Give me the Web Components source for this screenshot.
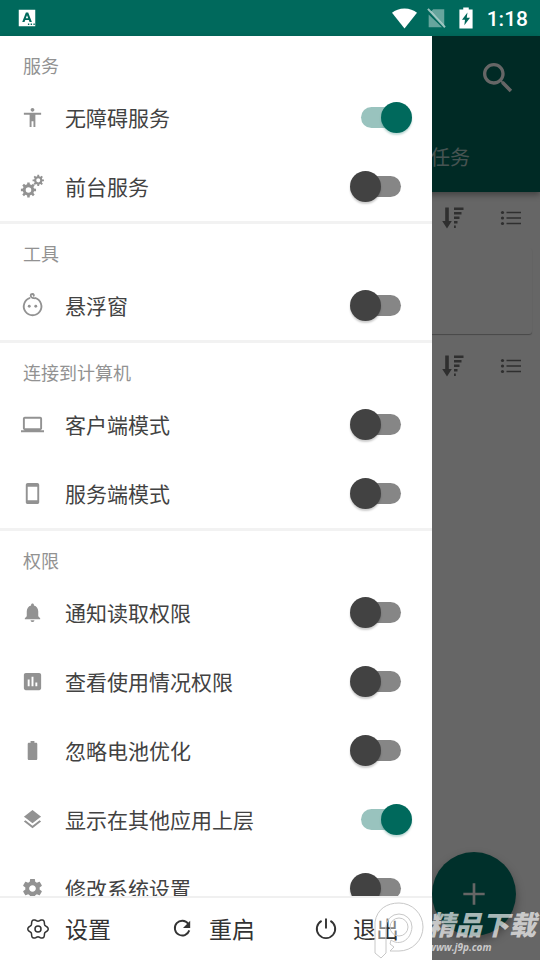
<!DOCTYPE html>
<html lang="zh-CN">
<head>
<meta charset="utf-8">
<meta name="viewport" content="width=device-width, initial-scale=1">
<title>服务</title>
<style>
html, body { margin: 0; height: 100%; }
body { font-family: Roboto, "Noto Sans CJK SC", sans-serif; overflow: hidden; }
</style>
</head>
<body>
<app-shell></app-shell>
<script>
const polar = (cx, cy, r, a) => `${(cx + r * Math.cos(a)).toFixed(2)} ${(cy + r * Math.sin(a)).toFixed(2)}`;
function cog(cx, cy, outer, inner, hole, teeth) {
  const pts = [], step = Math.PI * 2 / teeth;
  for (let i = 0; i < teeth; i++) {
    const a = i * step;
    pts.push(polar(cx, cy, inner, a - step * .3), polar(cx, cy, outer, a - step * .2),
             polar(cx, cy, outer, a + step * .2), polar(cx, cy, inner, a + step * .3));
  }
  return `M${pts.join('L')}ZM${cx - hole} ${cy}a${hole} ${hole} 0 1 0 ${hole * 2} 0a${hole} ${hole} 0 1 0 ${-hole * 2} 0Z`;
}
function wave(cx, cy, r, amp, lobes) {
  const pts = [];
  for (let i = 0; i < 72; i++) {
    const a = i * Math.PI / 36;
    pts.push(polar(cx, cy, r + amp * Math.cos(lobes * a), a));
  }
  return `M${pts.join('L')}Z`;
}
const line = (body, w) => `<g fill="none" stroke="currentColor" stroke-width="${w}">${body}</g>`;
const ICONS = {
  person: '<path d="M12 2c1.1 0 2 .9 2 2s-.9 2-2 2-2-.9-2-2 .9-2 2-2zm9 7h-6v13h-2v-6h-2v6H9V9H3V7h18v2z"/>',
  gears: `<path fill-rule="evenodd" d="${cog(7.8, 15.6, 8, 6, 2.9, 8)}"/><path fill-rule="evenodd" d="${cog(18, 5.6, 6, 4.4, 2.1, 8)}"/>`,
  baby: line('<path d="M9.6 4.1A9.2 9.2 0 1 0 14.6 4.1M12 4.2c-2.4-1-2.6-3.9-.3-4.2 1.7-.1 2.4 1.5 1 2.3M12 4.2c1.4.2 2.2.1 3 .4"/>', 1.9) + '<circle cx="8.6" cy="12.8" r="1.5"/><circle cx="15.4" cy="12.8" r="1.5"/>',
  laptop: '<path d="M20 18c1.1 0 1.99-.9 1.99-2L22 6c0-1.1-.9-2-2-2H4c-1.1 0-2 .9-2 2v10c0 1.1.9 2 2 2H0v2h24v-2h-4zM4 6h16v10H4V6z"/>',
  phone: '<path d="M17 1H7c-1.1 0-2 .9-2 2v18c0 1.1.9 2 2 2h10c1.1 0 2-.9 2-2V3c0-1.1-.9-2-2-2zm0 18H7V5h10v14z"/>',
  bell: '<path d="M12 22c1.1 0 2-.9 2-2h-4c0 1.1.9 2 2 2zm6-6v-5c0-3.07-1.64-5.64-4.5-6.32V4c0-.83-.67-1.5-1.5-1.5s-1.5.67-1.5 1.5v.68C7.63 5.36 6 7.92 6 11v5l-2 2v1h16v-1l-2-2z"/>',
  chart: '<path d="M19 3H5c-1.1 0-2 .9-2 2v14c0 1.1.9 2 2 2h14c1.1 0 2-.9 2-2V5c0-1.1-.9-2-2-2zM9 17H7v-7h2v7zm4 0h-2V7h2v10zm4 0h-2v-4h2v4z"/>',
  battery: '<path d="M15.67 4H14V2h-4v2H8.33C7.6 4 7 4.6 7 5.33v15.33C7 21.4 7.6 22 8.33 22h7.33c.74 0 1.34-.6 1.34-1.33V5.33C17 4.6 16.4 4 15.67 4z"/>',
  layers: '<path d="M11.99 18.54l-7.37-5.73L3 14.07l9 7 9-7-1.63-1.27-7.38 5.74zM12 16l7.36-5.73L21 9l-9-7-9 7 1.63 1.27L12 16z"/>',
  settings: '<path d="M19.43 12.98c.04-.32.07-.64.07-.98s-.03-.66-.07-.98l2.11-1.65c.19-.15.24-.42.12-.64l-2-3.46c-.12-.22-.39-.3-.61-.22l-2.49 1c-.52-.4-1.08-.73-1.69-.98l-.38-2.65C14.46 2.18 14.25 2 14 2h-4c-.25 0-.46.18-.49.42l-.38 2.65c-.61.25-1.17.59-1.69.98l-2.49-1c-.23-.09-.49 0-.61.22l-2 3.46c-.13.22-.07.49.12.64l2.11 1.65c-.04.32-.07.65-.07.98s.03.66.07.98l-2.11 1.65c-.19.15-.24.42-.12.64l2 3.46c.12.22.39.3.61.22l2.49-1c.52.4 1.08.73 1.69.98l.38 2.65c.03.24.24.42.49.42h4c.25 0 .46-.18.49-.42l.38-2.65c.61-.25 1.17-.59 1.69-.98l2.49 1c.23.09.49 0 .61-.22l2-3.46c.12-.22.07-.49-.12-.64l-2.11-1.65zM12 15.5c-1.93 0-3.5-1.57-3.5-3.5s1.57-3.5 3.5-3.5 3.5 1.57 3.5 3.5-1.57 3.5-3.5 3.5z"/>',
  cogline: line(`<path d="${wave(12, 12, 9, 1.2, 6)}"/><circle cx="12" cy="12" r="3"/>`, 1.5),
  refresh: line('<path d="M18.2 6.7A7.4 7.4 0 1 0 19.3 13.4"/>', 1.9) + '<path d="M20.2 3.8v7.2H13z"/>',
  power: line('<path d="M7.6 3.8A9.2 9.2 0 1 0 16.4 3.8M12 1.6v10"/>', 1.9),
  search: '<path d="M15.5 14h-.79l-.28-.27C15.41 12.59 16 11.11 16 9.5 16 5.91 13.09 3 9.5 3S3 5.91 3 9.5 5.91 16 9.5 16c1.61 0 3.09-.59 4.23-1.57l.27.28v.79l5 4.99L20.49 19l-4.99-5zm-6 0C7.01 14 5 11.99 5 9.5S7.01 5 9.5 5 14 7.01 14 9.5 11.99 14 9.5 14z"/>',
  sort: '<path d="M4.2 1.5h3.6V15h3L6 22.5 1.2 15h3zM13 1.5h9.5v2.4H13zM13 6h7.5v2.4H13zM13 10.5h5.5v2.4H13zM13 15h3.5v2.4H13zM13 19.5h1.8v2.4H13z"/>',
  list: '<circle cx="3.5" cy="6.5" r="1.6"/><circle cx="3.5" cy="12" r="1.6"/><circle cx="3.5" cy="17.5" r="1.6"/><path d="M7.5 5.8H22v1.4H7.5zM7.5 11.3H22v1.4H7.5zM7.5 16.8H22v1.4H7.5z"/>',
  plus: '<path d="M11 4h2v7h7v2h-7v7h-2v-7H4v-2h7z"/>',
  wifi: '<path d="M12 21.5L0 6.5C3 3.8 7.2 2.3 12 2.3s9 1.5 12 4.2z"/>',
  nosim: '<path opacity=".4" d="M9 2.5h12v17.8L6.5 5zM4 8.2L18.6 22H4z"/><path opacity=".6" d="M2.4 2.8L4 1.3 22.6 21.4 21 22.9z"/>',
  charging: '<path fill-rule="evenodd" d="M9 .5h6v2.3h4.2v20.7H4.8V2.8H9zM13.6 6L7.6 13.8h3.3L10.2 20l6.2-8.2h-3.6z"/>',
  badge: '<path fill-rule="evenodd" d="M3 3h18v18H3zM10.8 6L6.8 16.4h2.5l.8-2.2h3.9l.8 2.2h2.5L13.3 6zM12 8.9l1.3 3.5h-2.6zM13 18h1.5v1.5H13zM16 18h1.5v1.5H16zM19 18h1.5v1.5H19z"/>'
};

function define(name, css, html) {
  const t = document.createElement('template');
  t.innerHTML = `<style>*{box-sizing:border-box}${css}</style>${html}`;
  customElements.define(name, class extends HTMLElement {
    constructor() {
      super();
      this.attachShadow({ mode: 'open' }).append(t.content.cloneNode(true));
    }
  });
}

customElements.define('app-icon', class extends HTMLElement {
  connectedCallback() {
    if (this.shadowRoot) return;
    this.attachShadow({ mode: 'open' }).innerHTML =
      `<style>:host{display:block;flex:none;width:var(--icon-size,24px);height:var(--icon-size,24px)}svg{display:block;width:100%;height:100%;overflow:visible}</style>
       <svg viewBox="0 0 24 24" fill="currentColor" aria-hidden="true">${ICONS[this.getAttribute('name')]}</svg>`;
  }
});

define('status-bar', `
  :host { display: flex; align-items: center; gap: 8px; height: 36px; padding: 0 12px 0 16px; background: #00695c; color: #fff; --icon-size: 22px; }
  .left { margin-right: auto; }
  .wifi { --icon-size: 25px; }
  time { padding: 2px 0 0 2px; font-size: 21px; font-weight: 500; line-height: 24px; }
`, `<app-icon class="left" name="badge"></app-icon>
    <app-icon class="wifi" name="wifi"></app-icon><app-icon name="nosim"></app-icon>
    <app-icon name="charging"></app-icon><time>1:18</time>`);

customElements.define('switch-row', class extends HTMLElement {
  connectedCallback() {
    if (this.shadowRoot) return;
    this.attachShadow({ mode: 'open' }).innerHTML = `<style>
      :host { display: block; }
      label { box-sizing: border-box; display: flex; align-items: center; gap: 21px; height: 69px; padding: 0 20px 0 21px; color: #424242; font-size: 21px; line-height: 30px; }
      app-icon { --icon-size: 23px; color: #929292; }
      span { flex: 1; padding-top: 3px; }
      input { appearance: none; display: grid; align-items: center; width: 62px; height: 31px; margin: 0; }
      input::before, input::after { content: ""; grid-area: 1 / 1; }
      input::before { width: 40px; height: 21px; margin-left: 11px; border-radius: 11px; background: #868686; }
      input::after { width: 31px; height: 31px; border-radius: 50%; background: #424242; box-shadow: 0 2px 2px rgba(0,0,0,.2); }
      input:checked::before { background: #99c3be; }
      input:checked::after { justify-self: end; background: #00695c; box-shadow: 0 2px 2px rgba(0,105,92,.25); }
    </style><label><app-icon name="${this.getAttribute('icon')}"></app-icon><span><slot></slot></span><input type="checkbox" role="switch" ${this.hasAttribute('on') ? 'checked' : ''}></label>`;
  }
});

define('menu-group', `
  :host { display: block; border-bottom: 3px solid #f2f2f2; }
  h2 { margin: 0; padding: 19px 23px 4px; font-size: 18px; font-weight: 400; line-height: 24px; color: #929292; }
`, `<h2><slot name="title"></slot></h2><slot></slot>`);

customElements.define('footer-button', class extends HTMLElement {
  connectedCallback() {
    if (this.shadowRoot) return;
    this.attachShadow({ mode: 'open' }).innerHTML = `<style>
      :host { display: block; flex: 1; }
      button { display: flex; align-items: center; gap: 15px; width: 100%; height: 62px; margin: 0; padding: 0 0 0 26px; border: 0; background: none; color: #333; font: inherit; font-size: 23px; line-height: 32px; }
      span { padding-top: 3px; }
    </style><button type="button"><app-icon name="${this.getAttribute('icon')}"></app-icon><span><slot></slot></span></button>`;
  }
});

define('side-drawer', `
  :host { display: flex; flex-direction: column; background: #fff; }
  .list { flex: 1; min-height: 0; overflow-y: auto; scrollbar-width: none; }
  footer { display: flex; border-top: 2px solid #f0f0f0; }
`, `<div class="list">
  <menu-group><span slot="title">服务</span>
    <switch-row icon="person" on>无障碍服务</switch-row><switch-row icon="gears">前台服务</switch-row></menu-group>
  <menu-group><span slot="title">工具</span><switch-row icon="baby">悬浮窗</switch-row></menu-group>
  <menu-group><span slot="title">连接到计算机</span>
    <switch-row icon="laptop">客户端模式</switch-row><switch-row icon="phone">服务端模式</switch-row></menu-group>
  <menu-group><span slot="title">权限</span>
    <switch-row icon="bell">通知读取权限</switch-row><switch-row icon="chart">查看使用情况权限</switch-row>
    <switch-row icon="battery">忽略电池优化</switch-row><switch-row icon="layers" on>显示在其他应用上层</switch-row>
    <switch-row icon="settings">修改系统设置</switch-row></menu-group>
  </div>
  <footer><footer-button icon="cogline">设置</footer-button><footer-button icon="refresh">重启</footer-button><footer-button icon="power">退出</footer-button></footer>`);

define('list-tools', `
  :host { display: flex; justify-content: flex-end; align-items: center; gap: 34px; height: 52px; padding-right: 17px; color: #757575; }
  button { margin: 0; padding: 0; border: 0; background: none; color: inherit; }
`, `<button type="button" aria-label="排序"><app-icon name="sort"></app-icon></button><button type="button" aria-label="列表"><app-icon name="list"></app-icon></button>`);

define('main-screen', `
  :host { display: block; background: #fefefe; }
  header { background: #00695c; color: #fff; box-shadow: 0 3px 6px rgba(0,0,0,.35); }
  button { margin: 0; padding: 0; border: 0; background: none; color: inherit; }
  .bar { display: flex; justify-content: flex-end; align-items: center; height: 84px; padding-right: 22px; --icon-size: 40px; }
  nav { display: flex; justify-content: flex-end; align-items: center; height: 72px; padding: 4px 70px 0 0; }
  a { color: rgba(255,255,255,.7); font-size: 20px; line-height: 30px; text-decoration: none; }
  .card { height: 86px; margin: 4px 8px 6px; border-radius: 3px; background: #fff; box-shadow: 0 1px 1px rgba(0,0,0,.3); }
  .fab { position: absolute; right: 24px; bottom: 24px; display: grid; place-items: center; width: 84px; height: 84px; border-radius: 50%; background: #00796b; color: #fff; --icon-size: 32px; box-shadow: 0 5px 10px rgba(0,0,0,.35); }
`, `<header><div class="bar"><button type="button" aria-label="搜索"><app-icon name="search"></app-icon></button></div>
  <nav><a href="#tasks">任务</a></nav></header>
  <list-tools></list-tools><div class="card"></div><list-tools></list-tools>
  <button class="fab" type="button" aria-label="添加"><app-icon name="plus"></app-icon></button>`);

define('site-mark', `
  :host { display: flex; align-items: center; color: rgba(255,255,255,.66); pointer-events: none; }
  svg { display: block; width: 54px; height: 60px; }
  p { margin: 0; font-style: italic; white-space: nowrap; }
  .name { font-size: 27px; font-weight: 900; line-height: 30px; padding-top: 4px; }
  .url { font-family: "Open Sans", sans-serif; font-size: 10px; font-weight: 700; line-height: 12px; }
`, `<svg viewBox="0 0 54 60" fill="#fff" fill-opacity=".4" stroke="#c8c8c8" aria-hidden="true">
    <path fill-rule="evenodd" d="M1 53V22C3 9 13 3 25 3a24 24 0 0 1 0 48H16l1-1 3-3-4-3 1-4c8 6 20 1 21-13a13 13 0 0 0-26 0v26l-5 5z"/>
    <circle cx="25" cy="27" r="9"/></svg>
  <div><p class="name">精品下载</p><p class="url">www.j9p.com</p></div>`);

define('app-shell', `
  :host { display: flex; flex-direction: column; height: 100vh; overflow: hidden; }
  .stage { position: relative; flex: 1; min-height: 0; display: grid; }
  .scrim { position: absolute; inset: 0; background: rgba(0,0,0,.6); }
  side-drawer { position: absolute; inset: 0 auto 0 0; width: 80%; }
  site-mark { position: absolute; right: 4px; bottom: 0; }
`, `<status-bar></status-bar><div class="stage"><main-screen></main-screen><div class="scrim"></div><side-drawer></side-drawer><site-mark></site-mark></div>`);
</script>
</body>
</html>
